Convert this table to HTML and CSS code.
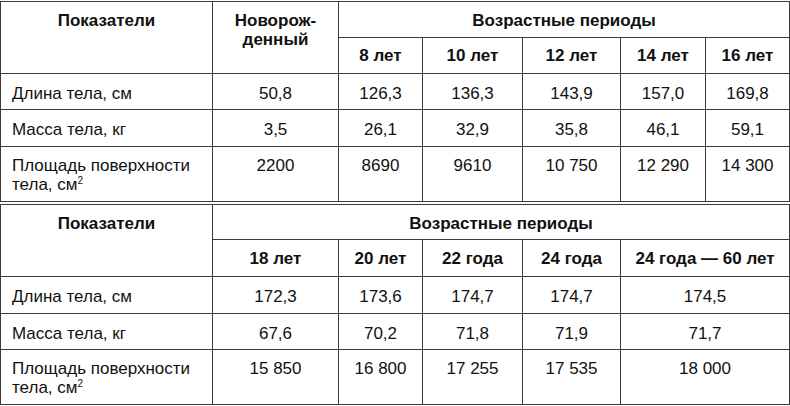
FILE: index.html
```html
<!DOCTYPE html>
<html lang="ru">
<head>
<meta charset="utf-8">
<link rel="stylesheet" href="styles.css">
</head>
<body>
<div class="page">
<table class="grid t1">
  <colgroup>
    <col class="c-name"><col class="c-nb"><col class="c-8"><col class="c-10"><col class="c-12"><col class="c-14"><col class="c-16">
  </colgroup>
  <tr class="h1">
    <th rowspan="2" class="top">Показатели</th>
    <th rowspan="2" class="top">Новорож-<br>денный</th>
    <th colspan="5">Возрастные периоды</th>
  </tr>
  <tr class="h2">
    <th>8 лет</th><th>10 лет</th><th>12 лет</th><th>14 лет</th><th>16 лет</th>
  </tr>
  <tr class="r">
    <td class="name">Длина тела, см</td><td>50,8</td><td>126,3</td><td>136,3</td><td>143,9</td><td>157,0</td><td>169,8</td>
  </tr>
  <tr class="r r2">
    <td class="name">Масса тела, кг</td><td>3,5</td><td>26,1</td><td>32,9</td><td>35,8</td><td>46,1</td><td>59,1</td>
  </tr>
  <tr class="rt">
    <td class="name">Площадь поверхности<br>тела, см<sup>2</sup></td><td>2200</td><td>8690</td><td>9610</td><td>10 750</td><td>12 290</td><td>14 300</td>
  </tr>
</table>
<table class="grid t2">
  <colgroup>
    <col class="c-name"><col class="c-nb"><col class="c-8"><col class="c-10"><col class="c-12"><col class="c-last">
  </colgroup>
  <tr class="h1b">
    <th rowspan="2" class="top">Показатели</th>
    <th colspan="5">Возрастные периоды</th>
  </tr>
  <tr class="h2b">
    <th>18 лет</th><th>20 лет</th><th>22 года</th><th>24 года</th><th>24 года — 60 лет</th>
  </tr>
  <tr class="r r2">
    <td class="name">Длина тела, см</td><td>172,3</td><td>173,6</td><td>174,7</td><td>174,7</td><td>174,5</td>
  </tr>
  <tr class="r">
    <td class="name">Масса тела, кг</td><td>67,6</td><td>70,2</td><td>71,8</td><td>71,9</td><td>71,7</td>
  </tr>
  <tr class="rt">
    <td class="name">Площадь поверхности<br>тела, см<sup>2</sup></td><td>15 850</td><td>16 800</td><td>17 255</td><td>17 535</td><td>18 000</td>
  </tr>
</table>
</div>
</body>
</html>
```
FILE: styles.css
```css
html, body {
  margin: 0;
  padding: 0;
  background: #ffffff;
}
.page {
  padding-top: 1px;
  width: 790px;
}
.grid {
  border-collapse: collapse;
  table-layout: fixed;
  width: 789px;
  font-family: "Liberation Sans", Arial, sans-serif;
  font-size: 17px;
  line-height: 19px;
  color: #111111;
}
.t2 {
  margin-top: 2px;
}
.grid th, .grid td {
  border: 1px solid #3c3c3c;
  padding: 0 4px;
  text-align: center;
  vertical-align: top;
  white-space: nowrap;
}
.grid th {
  font-weight: bold;
}
.c-name { width: 212px; }
.c-nb { width: 126px; }
.c-8 { width: 84px; }
.c-10 { width: 100px; }
.c-12 { width: 98px; }
.c-14 { width: 85px; }
.c-16 { width: 84px; }
.c-last { width: 169px; }

.h1 { height: 36px; }
.h1 th { padding-top: 9px; }
.h2 { height: 36px; }
.h2 th { padding-top: 8px; }
.r { height: 36px; }
.r td { padding-top: 10px; }
.r2 { height: 37px; }
.rt { height: 55px; }
.rt td { padding-top: 9px; }

.h1b { height: 35px; }
.h1b th { padding-top: 9px; }
.h2b { height: 37px; }
.h2b th { padding-top: 9px; }

.grid th.top {
  padding-top: 9px;
}
.grid td.name {
  text-align: left;
  padding-left: 11px;
}
sup {
  font-size: 10px;
  line-height: 0;
  vertical-align: 6px;
}
```
